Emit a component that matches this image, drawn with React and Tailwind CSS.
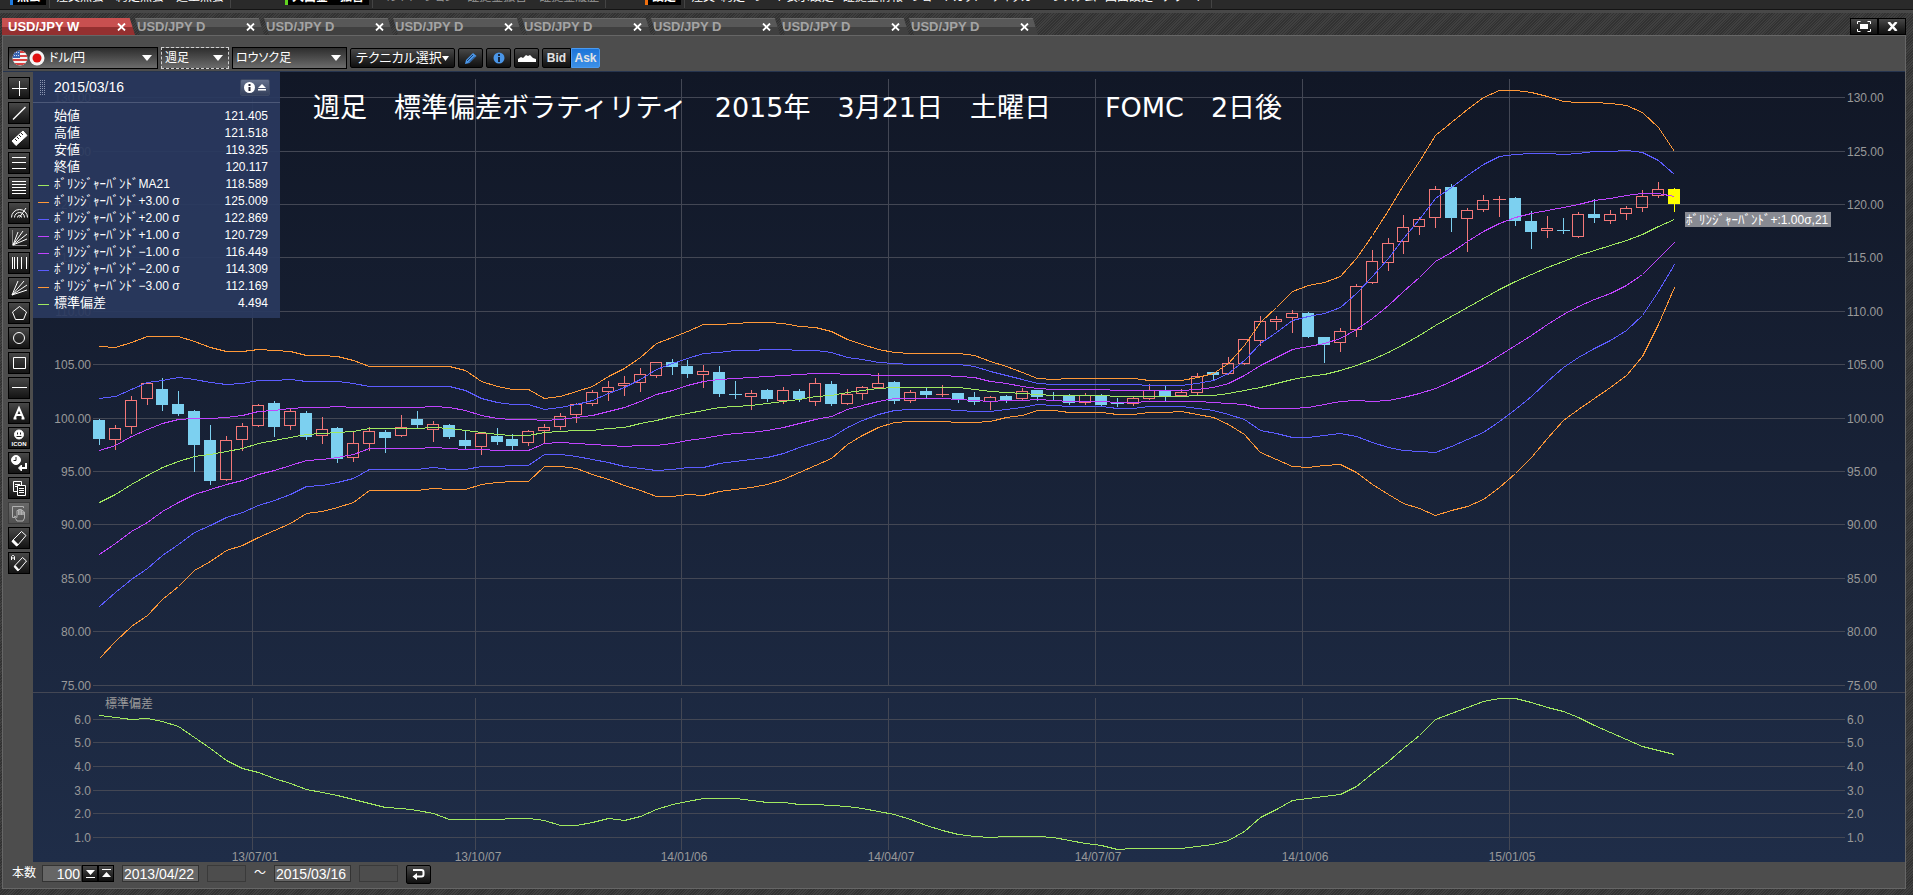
import React, { useState } from 'react';

const MENU_GROUPS = [
  { title: '照会', accent: 'bg-[#1e7be0]', items: ['注文照会', '約定照会', '建玉照会'], width: 'w-[275px]', color: 'gap-[12px] text-white' },
  { title: '入出金・振替', accent: 'bg-[#62d420]', items: ['コンバージョン', '証拠金振替', '証拠金履歴'], width: 'w-[360px]', color: 'gap-[12px] text-[#9a9a9a]' },
  {
    title: '設定',
    accent: 'bg-[#f07010]',
    items: ['注文・約定', 'レート表示設定', '証拠金情報', 'ショートカット', 'ティッカー', 'システム', '画面設定', 'アラート'],
    width: 'w-[556px]',
    color: 'gap-[9px] text-white',
  },
];

const TABS = ['USD/JPY W', 'USD/JPY D', 'USD/JPY D', 'USD/JPY D', 'USD/JPY D', 'USD/JPY D', 'USD/JPY D', 'USD/JPY D'];

const KANA = 'ﾎﾞﾘﾝｼﾞｬｰﾊﾞﾝﾄﾞ';

const LEGEND = [
  { label: '始値', value: '121.405' },
  { label: '高値', value: '121.518' },
  { label: '安値', value: '119.325' },
  { label: '終値', value: '120.117' },
  { kana: true, label: 'MA21', value: '118.589', line: 'bg-[#a0e860]' },
  { kana: true, label: '+3.00 σ', value: '125.009', line: 'bg-[#ff9838]' },
  { kana: true, label: '+2.00 σ', value: '122.869', line: 'bg-[#5c5cff]' },
  { kana: true, label: '+1.00 σ', value: '120.729', line: 'bg-[#c044ff]' },
  { kana: true, label: '−1.00 σ', value: '116.449', line: 'bg-[#c044ff]' },
  { kana: true, label: '−2.00 σ', value: '114.309', line: 'bg-[#5c5cff]' },
  { kana: true, label: '−3.00 σ', value: '112.169', line: 'bg-[#ff9838]' },
  { label: '標準偏差', value: '4.494', line: 'bg-[#a0e860]' },
];

// [direction, high, body top, body bottom, low] on the chart's y scale
const CANDLES = [
  ['D', 419, 420, 439, 445], ['U', 425, 428, 440, 450], ['U', 396, 400, 427, 434], ['U', 383, 383, 399, 405],
  ['D', 378, 389, 405, 411], ['D', 391, 404, 414, 416], ['D', 410, 411, 445, 472], ['D', 425, 440, 481, 485],
  ['U', 436, 440, 480, 481], ['U', 423, 426, 440, 451], ['U', 404, 405, 426, 427], ['D', 401, 403, 427, 437],
  ['U', 409, 411, 426, 430], ['D', 411, 413, 437, 440], ['U', 417, 429, 436, 444], ['D', 427, 428, 459, 463],
  ['U', 432, 443, 458, 462], ['U', 427, 431, 444, 451], ['D', 430, 432, 438, 453], ['U', 415, 427, 436, 437],
  ['D', 411, 419, 425, 428], ['U', 421, 424, 430, 442], ['D', 424, 425, 437, 439], ['D', 430, 440, 446, 450],
  ['U', 432, 433, 447, 455], ['D', 428, 436, 442, 445], ['D', 434, 439, 446, 451], ['U', 430, 431, 443, 446],
  ['U', 424, 427, 431, 444], ['U', 413, 416, 427, 430], ['U', 403, 404, 415, 423], ['U', 390, 392, 404, 406],
  ['U', 381, 387, 392, 401], ['U', 376, 383, 386, 396], ['U', 368, 374, 383, 392], ['U', 362, 362, 376, 378],
  ['D', 359, 362, 367, 375], ['D', 360, 366, 374, 378], ['U', 365, 371, 375, 388], ['D', 366, 372, 394, 397],
  ['D', 381, 394, 395, 399], ['U', 390, 393, 397, 410], ['D', 389, 390, 399, 402], ['U', 387, 390, 401, 404],
  ['D', 389, 391, 399, 402], ['U', 378, 383, 402, 406], ['D', 381, 384, 404, 406], ['U', 389, 394, 404, 405],
  ['U', 386, 387, 394, 400], ['U', 373, 383, 388, 388], ['D', 381, 382, 401, 404], ['U', 390, 392, 401, 403],
  ['D', 388, 391, 395, 398], ['U', 385, 394, 395, 397], ['D', 393, 393, 399, 403], ['D', 392, 397, 402, 405],
  ['U', 396, 397, 402, 410], ['D', 395, 396, 400, 403], ['U', 388, 391, 399, 400], ['D', 390, 390, 397, 401],
  ['D', 392, 395, 396, 400], ['D', 394, 395, 403, 405], ['U', 393, 395, 403, 405], ['D', 394, 395, 405, 407],
  ['D', 398, 403, 404, 407], ['U', 397, 398, 404, 406], ['U', 384, 390, 399, 400], ['D', 386, 390, 396, 401],
  ['U', 389, 392, 396, 396], ['U', 373, 376, 393, 395], ['D', 372, 372, 375, 380], ['U', 357, 363, 374, 375],
  ['U', 339, 339, 364, 365], ['U', 316, 321, 341, 346], ['U', 316, 319, 322, 330], ['U', 310, 313, 318, 333],
  ['D', 312, 313, 337, 338], ['D', 337, 337, 345, 363], ['U', 328, 331, 343, 352], ['U', 284, 286, 330, 337],
  ['U', 250, 261, 283, 284], ['U', 238, 243, 263, 271], ['U', 215, 227, 242, 254], ['U', 217, 219, 227, 235],
  ['U', 186, 189, 218, 228], ['D', 184, 187, 218, 232], ['U', 208, 210, 219, 252], ['U', 195, 200, 210, 212],
  ['U', 196, 199, 200, 217], ['D', 197, 198, 221, 226], ['D', 211, 221, 232, 249], ['U', 216, 228, 231, 238],
  ['D', 218, 230, 231, 234], ['U', 212, 214, 237, 238], ['D', 199, 214, 218, 223], ['U', 210, 214, 221, 224],
  ['U', 206, 208, 214, 220], ['U', 190, 196, 208, 212], ['U', 182, 189, 196, 198], ['N', 188, 189, 204, 212],
];

const MA = [
  502.3, 494.3, 484.3, 475.7, 467.7, 461.3, 456.3, 454.3, 451, 448.3, 443.3, 440.3, 437.3, 434, 433.3, 432, 431.3,
  428.3, 428.3, 428.3, 428.3, 427.3, 428, 430, 432.7, 434.3, 435.3, 435.3, 432.3, 431.3, 430.3, 430, 428.3, 427,
  423.7, 420, 416.7, 413, 410.3, 407.7, 406.3, 405, 403.7, 401.3, 399, 396.7, 395, 392.3, 390, 388.3, 387.3, 387.3,
  387.3, 387.3, 387.7, 389, 391.3, 392.3, 393.7, 394.3, 395, 395.5, 395.5, 395.5, 396.3, 396.3, 396.3, 396.3, 396,
  395.7, 395.3, 393.7, 390, 387.3, 383.3, 379, 376.7, 374.3, 370.3, 365.3, 359.7, 352.7, 344, 335.3, 325.3, 316.7,
  307.7, 298.7, 289.3, 281.7, 274.7, 267.7, 261, 255.7, 250.3, 245.7, 240, 234.3, 226, 219.5,
];

const UPPER = [
  346.3, 347.3, 342, 336.3, 336.3, 336.3, 341.7, 347.3, 351.3, 351.3, 349.3, 350.3, 351.3, 355, 355, 356.3, 360.3,
  366.3, 366.3, 366.3, 366.3, 366.3, 366.3, 370.7, 381.3, 386.3, 389.3, 389.3, 398.3, 396.3, 391.7, 386, 376.7,
  368.3, 357, 343.7, 337, 331.3, 324.7, 324.3, 323.3, 322.7, 322.7, 323, 326, 327.7, 331.7, 339.7, 344.7, 349.3,
  352.3, 353.3, 353.3, 353.3, 353.3, 355.3, 361.3, 366.7, 372.3, 378.3, 379.3, 378.3, 378.3, 378.3, 378.3, 378.3,
  380.3, 380.3, 380.3, 377, 373, 363, 345.7, 322.3, 307.3, 291.7, 285.7, 282.7, 276, 258.3, 235, 210.7, 185, 161.7,
  135, 122.7, 109.3, 97.7, 90.7, 90.3, 92.3, 96.7, 101.3, 102.3, 102.3, 103.7, 105, 112.3, 127.7, 151.3,
];

const DEVIATION = [
  715.3, 717.3, 719.3, 718.3, 721.3, 726, 737.3, 748, 760, 768, 772, 778, 783.7, 789.7, 792.3, 795, 799, 803, 807.3,
  808, 810, 813.7, 819.3, 819.3, 819.3, 819.3, 818.3, 818.3, 820.7, 825.3, 825.3, 822.7, 818.7, 820.7, 816, 809.7,
  804.3, 801.3, 798.3, 798.3, 798.3, 800.3, 802.3, 802.3, 804.3, 804.3, 805.3, 806, 808, 811.7, 814.7, 819, 825.3,
  830.3, 834.3, 836.3, 837.3, 836.3, 836.3, 836.3, 837.7, 840.7, 843.7, 845.7, 849.3, 848.3, 848.3, 848.3, 848.3,
  846.7, 844.7, 840.3, 831, 817.3, 809, 800.7, 798.7, 796.7, 794.7, 786, 773.3, 761.3, 748.3, 735.7, 719.7, 713.7,
  707, 701.7, 698.3, 698.7, 702.7, 707.3, 711.7, 717.3, 725.3, 732, 739.7, 746, 750.3, 754.3,
];

const BANDS = [
  { k: 3, color: '#ff9838' },
  { k: 2, color: '#5c5cff' },
  { k: 1, color: '#c044ff' },
  { k: 0, color: '#a0e860' },
  { k: -1, color: '#c044ff' },
  { k: -2, color: '#5c5cff' },
  { k: -3, color: '#ff9838' },
];

const PRICE_AXIS = [
  ['130.00', 97], ['125.00', 151], ['120.00', 204], ['115.00', 257], ['110.00', 311], ['105.00', 364],
  ['100.00', 418], ['95.00', 471], ['90.00', 524], ['85.00', 578], ['80.00', 631], ['75.00', 685],
];

const DEVIATION_AXIS = [['6.0', 719], ['5.0', 742], ['4.0', 766], ['3.0', 790], ['2.0', 813], ['1.0', 837]];

const DATE_AXIS = [
  ['13/07/01', 252], ['13/10/07', 475], ['14/01/06', 681], ['14/04/07', 888], ['14/07/07', 1095], ['14/10/06', 1302],
  ['15/01/05', 1509],
];

const CANDLE_COLORS = { U: '#f47878', D: '#7cd0f0', N: '#ffff00' };

const barX = (i) => Math.round(98.8 + 15.91 * i);

const toPoints = (values) => values.map((y, i) => `${barX(i) + 0.5},${Math.floor(y) + 0.5}`).join(' ');

const bandPoints = (k) => toPoints(MA.map((mid, i) => mid - ((mid - UPPER[i]) / 3) * k));

const TOOLS = [
  { name: '十字線', icon: <path d="M10.5 3v15M3 10.5h15" /> },
  { name: 'トレンドライン', icon: <path d="M4 16.500 16.500 4" strokeWidth="1.500" /> },
  {
    name: '定規',
    icon: (
      <>
        <path d="M3 13 14 3l4 4.500L7 17.500z" fill="#fff" />
        <path d="m6 11 2 2m0-4 2 2m0-4 2 2m0-4 2 2" stroke="#222" />
      </>
    ),
  },
  { name: '3本線', icon: <path d="M3 4.500h14M3 9.500h14M3 15.500h14" /> },
  { name: '5本線', icon: <path d="M3 3.500h14M3 6.500h14M3 9.500h14M3 12.500h14M3 15.500h14" /> },
  { name: 'アーク', icon: <path d="M2.500 14.500a8 8 0 0 1 16 0M5.500 14.500a5 5 0 0 1 10 0M8.500 14.500a2 2 0 0 1 4 0M10.500 14.500 17 5" /> },
  {
    name: 'ファン',
    icon: (
      <>
        <path d="M3.500 2v15.500H18" stroke="#888" />
        <path d="M4 17 9 4M4 17 14 3M4 17 18 6M4 17l14-6" />
      </>
    ),
  },
  { name: 'タイムゾーン', icon: <path d="M3.500 4v12M5.500 4v12M8.500 4v12M12.500 4v12M17.500 4v12" /> },
  { name: 'スピードライン', icon: <path d="M3 17 9 3M3 17 15 3M3 17 18 7M3 17l15-5" /> },
  { name: '五角形', icon: <path d="m10.500 3.500 7 5.500-3 7.500h-8L3.500 9z" /> },
  { name: '円', icon: <circle cx="10" cy="10" r="5.500" /> },
  { name: '四角形', icon: <path d="M4.500 4.500h12v11h-12z" /> },
  { name: '水平線', icon: <path d="M3 9.500h15" /> },
  { name: 'テキスト', icon: <path d="M5.500 15.500 10 5l4.500 10.500M7 12h6M4.500 15.500h3M12.500 15.500h3" strokeWidth="2" /> },
  {
    name: 'アイコン',
    icon: (
      <>
        <circle cx="10" cy="6.500" r="4.500" fill="#fff" />
        <path d="M8.500 4.500v2M11.500 4.500v2M7.500 8.500h5" stroke="#222" />
        <text x="10" y="18" textAnchor="middle" fontSize="6" fontWeight="700" fill="#fff" stroke="none">ICON</text>
      </>
    ),
  },
  {
    name: '時間を戻す',
    icon: (
      <>
        <circle cx="7" cy="7" r="4.500" fill="#fff" />
        <path d="M7 4v3.500H4.500" stroke="#222" />
        <path d="M17 10v5h-5" strokeWidth="2" />
        <path d="m12.500 12-3 3 3 3z" fill="#fff" />
      </>
    ),
  },
  {
    name: 'コピー',
    icon: (
      <>
        <path d="M4.500 3.500h8v10h-8zM6 6.500h5M6 8.500h5" />
        <path d="M8.500 7.500h8v10h-8z" fill="#222" />
        <path d="M10 10.500h5M10 12.500h5M10 14.500h5" />
      </>
    ),
  },
  {
    name: '移動',
    disabled: true,
    icon: (
      <>
        <path d="M6 14.500H3.500v-11h11V5" />
        <path d="M8 18c-1-2-2-3-2.500-5l2.500 1.500V7.500h1.500V12 6.500H11V12 6.500h1.500V12 7.500H14V12 9h1.500v6L14 18z" />
      </>
    ),
  },
  {
    name: '消しゴム',
    icon: (
      <>
        <path d="m3.500 12.500 9-9 4.500 4-8.500 10z" />
        <path d="m3.500 12.500 5 5" strokeWidth="3" />
      </>
    ),
  },
  {
    name: '全消去',
    icon: (
      <>
        <path d="m5.500 13 8-8.500 4 3.500-8 9.500z" />
        <path d="m5.500 13 4 4.500" strokeWidth="2.500" />
        <path d="M2.500 7V3.500l1-1h1l1 1V7M3 5h3" />
      </>
    ),
  },
];

const DARK_BUTTON = 'border border-black bg-linear-to-b from-[#484848] to-[#101010]';
const FIELD = 'h-[17px] border border-[#333] bg-[#666] px-px text-[14px] leading-[15px] text-white outline-none';

const Caret = () => (
  <svg className="h-[6px] w-[10px] shrink-0" viewBox="0 0 10 6" fill="#fff" aria-hidden="true">
    <path d="M0 0h10L5 6z" />
  </svg>
);

const MenuStrip = () => (
  <nav aria-label="メインメニュー" className="h-[10px] overflow-hidden border-b border-[#141414] bg-[#2a2a2a] pl-[10px]">
    <div className="flex h-[8px] text-[12px] leading-[16px]">
      {MENU_GROUPS.map((group) => (
        <div key={group.title} className={`flex shrink-0 ${group.width}`}>
          <div className="flex h-[5px] items-end gap-[4px] bg-black pr-[5px] font-bold text-white">
            <span className={`h-[5px] w-[3px] ${group.accent}`} />
            <a href="#menu" className="whitespace-nowrap">{group.title}</a>
          </div>
          <div className={`ml-[3px] flex h-[8px] items-end border-x border-[#444] px-[6px] ${group.color}`}>
            {group.items.map((item) => (
              <a key={item} href="#menu" className="mb-[3px] whitespace-nowrap [font-feature-settings:'palt']">{item}</a>
            ))}
          </div>
        </div>
      ))}
    </div>
  </nav>
);

const TabBar = ({ active, onSelect }) => (
  <div className="mr-[7px] ml-[2px] flex h-[17px] items-end">
    {TABS.map((label, i) => (
      <div
        key={i}
        className={
          i === active
            ? 'flex h-[17px] w-[133px] items-center bg-linear-to-b from-[#c85050] from-50% to-[#943030] to-50% pr-[9px] pl-[6px] text-white [clip-path:polygon(0_0,96%_0,100%_100%,0_100%)]'
            : 'flex h-[17px] w-[129px] items-center border-t border-[#6a6a6a] bg-linear-to-b from-[#585858] from-50% to-[#404040] to-50% pr-[9px] pl-[2px] text-[#a4a4a4] [clip-path:polygon(0_0,96%_0,100%_100%,4%_100%)]'
        }
      >
        <button type="button" onClick={() => onSelect(i)} className="flex-1 text-left text-[13px] leading-[16px] font-bold">
          {label}
        </button>
        <button type="button" aria-label="タブを閉じる" className="text-white">
          <svg className="h-[8px] w-[9px]" viewBox="0 0 9 8" fill="none" stroke="currentColor" strokeWidth="1.800">
            <path d="m1 .5 7 7m0-7-7 7" />
          </svg>
        </button>
      </div>
    ))}
    <div className="ml-auto flex">
      <button type="button" aria-label="最大化" className={`flex h-[17px] w-[28px] items-center justify-center ${DARK_BUTTON}`}>
        <svg className="h-[11px] w-[14px]" viewBox="0 0 14 11" fill="none" stroke="#fff">
          <path d="M.5 3V.5h3M10.500.5h3V3M13.500 8v2.500h-3M3.500 10.500h-3V8" />
          <path d="M3 3h8v5H3z" fill="#fff" stroke="none" />
        </svg>
      </button>
      <button type="button" aria-label="閉じる" className={`flex h-[17px] w-[28px] items-center justify-center ${DARK_BUTTON}`}>
        <svg className="h-[9px] w-[11px]" viewBox="0 0 11 9" fill="none" stroke="#fff" strokeWidth="2.500">
          <path d="m1.500 0 8 9m0-9-8 9" />
        </svg>
      </button>
    </div>
  </div>
);

const Picker = ({ label, options, className, children }) => (
  <div className={`flex h-[22px] items-center bg-linear-to-b from-[#2e2e2e] to-[#6c6c6c] pr-[5px] pl-[3px] ${className}`}>
    {children}
    <select
      aria-label={label}
      className="min-w-0 flex-1 appearance-none bg-transparent text-[12px] leading-[18px] text-white outline-none [font-feature-settings:'palt']"
    >
      {options.map((option) => (
        <option key={option} className="bg-[#444]">{option}</option>
      ))}
    </select>
    <Caret />
  </div>
);

const Flags = () => (
  <svg className="mr-[3px] h-[16px] w-[34px] shrink-0" viewBox="0 0 34 16" aria-hidden="true">
    <defs>
      <clipPath id="us">
        <circle cx="8" cy="8" r="7.500" />
      </clipPath>
    </defs>
    <g clipPath="url(#us)">
      <path d="M0 0h16v16H0z" fill="#f4f4f4" />
      <path d="M0 2h16M0 6h16M0 10h16M0 14h16" stroke="#d84040" strokeWidth="2" />
      <path d="M0 0h8v8H0z" fill="#3a64b0" />
      <path d="M2 2.500h6M2 5.500h6" stroke="#c8d8f0" strokeDasharray="1 1" />
    </g>
    <circle cx="25" cy="8" r="7.500" fill="#f4f4f4" />
    <circle cx="25" cy="8" r="4.500" fill="#e01010" />
  </svg>
);

const Toolbar = () => {
  const [side, setSide] = useState('Ask');

  return (
    <div className="flex h-[36px] items-center gap-[3px] border-b border-[#26344e] pt-[9px] pl-[5px]">
      <Picker label="通貨ペア" options={['ドル/円', 'ユーロ/円']} className="w-[150px] border border-black">
        <Flags />
      </Picker>
      <Picker label="足種" options={['週足', '日足']} className="w-[68px] border border-dashed border-[#d0d0d0]" />
      <Picker label="チャート種類" options={['ロウソク足', 'ラインチャート']} className="w-[115px] border border-black" />
      <button
        type="button"
        className={`flex h-[20px] w-[105px] items-center justify-between rounded-xs px-[5px] text-[13px] leading-[18px] whitespace-nowrap text-white [font-feature-settings:'palt'] ${DARK_BUTTON}`}
      >
        テクニカル選択
        <svg className="h-[5px] w-[7px]" viewBox="0 0 7 5" fill="#fff"><path d="M0 0h7L3.500 5z" /></svg>
      </button>
      <button type="button" aria-label="描画" className={`flex h-[20px] w-[25px] items-center justify-center rounded-xs ${DARK_BUTTON}`}>
        <svg className="h-[13px] w-[14px]" viewBox="0 0 14 13" fill="#4a96e8">
          <path d="m1 12 1-4 7-7 3.500 3L5.500 11z" />
          <path d="m3 9 6-6M5 10.500l6-6" stroke="#1c3c66" />
        </svg>
      </button>
      <button type="button" aria-label="情報" className={`flex h-[20px] w-[25px] items-center justify-center rounded-xs ${DARK_BUTTON}`}>
        <svg className="h-[12px] w-[12px]" viewBox="0 0 12 12">
          <circle cx="6" cy="6" r="5.500" fill="#4a96e8" />
          <path d="M6 2v2M6 5v5" stroke="#182840" strokeWidth="2" />
        </svg>
      </button>
      <button type="button" aria-label="エリア表示" className={`flex h-[20px] w-[25px] items-center justify-center rounded-xs ${DARK_BUTTON}`}>
        <svg className="h-[8px] w-[18px]" viewBox="0 0 18 8" fill="#fff">
          <path d="M0 8V5l3-2 2 1 3-3 2 1 2-1 3 3 3 1v3z" />
        </svg>
      </button>
      <div className="flex">
        {['Bid', 'Ask'].map((name) => (
          <button
            key={name}
            type="button"
            aria-pressed={side === name}
            onClick={() => setSide(name)}
            className={
              side === name
                ? 'h-[20px] w-[29px] rounded-r-xs border border-[#4a9af0] bg-linear-to-b from-[#1c74d8] to-[#3c90e8] text-[12px] leading-[18px] font-bold text-[#e4e4e4]'
                : 'h-[20px] w-[29px] rounded-l-xs border border-black bg-linear-to-b from-[#444] to-[#111] text-[12px] leading-[18px] font-bold text-[#e4e4e4]'
            }
          >
            {name}
          </button>
        ))}
      </div>
    </div>
  );
};

const ToolRail = () => (
  <aside className="flex w-[30px] shrink-0 flex-col items-center gap-[3px] pt-[5px] pl-[2px]">
    {TOOLS.map((tool) => (
      <button
        key={tool.name}
        type="button"
        aria-label={tool.name}
        disabled={tool.disabled}
        className={
          tool.disabled
            ? 'h-[22px] w-[22px] border border-[#3c3c3c] bg-linear-to-b from-[#686868] to-[#505050] text-[#b0b0b0]'
            : 'h-[22px] w-[22px] border border-black bg-linear-to-b from-[#484848] to-[#141414] text-white'
        }
      >
        <svg className="h-[20px] w-[20px]" viewBox="0 0 20 20" fill="none" stroke="currentColor">
          {tool.icon}
        </svg>
      </button>
    ))}
  </aside>
);

const Candle = ({ index, data }) => {
  const [kind, high, top, bottom, low] = data;
  const x = barX(index);
  const color = CANDLE_COLORS[kind];
  const flat = bottom - top <= 1;

  return (
    <g stroke={color}>
      <path d={`M${x + 0.5} ${high}V${top}M${x + 0.5} ${bottom}V${low}`} />
      {flat && <path d={`M${x - 6} ${top + 0.5}H${x + 7}`} />}
      {!flat && kind === 'U' && <rect x={x - 5.5} y={top + 0.5} width="11" height={bottom - top - 1} fill="none" />}
      {!flat && kind !== 'U' && <rect x={x - 6} y={top} width="12" height={bottom - top} fill={color} stroke="none" />}
    </g>
  );
};

const AxisRow = ({ label, y }) => (
  <>
    <path d={`M93 ${y + 0.5}H1845`} stroke="#434754" />
    <text x="91" y={y + 5} textAnchor="end">{label}</text>
    <text x="1847" y={y + 5}>{label}</text>
  </>
);

const Chart = () => (
  <svg
    className="block h-auto w-full text-[12px]"
    viewBox="33 72 1872 790"
    role="img"
    aria-label="USD/JPY 週足チャート"
    fill="#999"
  >
    <defs>
      <linearGradient id="sky" x1="0" y1="0" x2="0" y2="1">
        <stop offset="0" stopColor="#111726" />
        <stop offset="1" stopColor="#1f2d48" />
      </linearGradient>
    </defs>
    <rect x="33" y="72" width="1872" height="790" fill="url(#sky)" />

    <path d="M33 692.500H1905" stroke="#434754" />
    {PRICE_AXIS.map(([label, y]) => (
      <AxisRow key={label} label={label} y={y} />
    ))}
    {DEVIATION_AXIS.map(([label, y]) => (
      <AxisRow key={label} label={label} y={y} />
    ))}
    {DATE_AXIS.map(([label, x]) => (
      <g key={label}>
        <path d={`M${x + 0.5} 79V685M${x + 0.5} 698V850`} stroke="#434754" />
        <text x={x + 3} y="861" textAnchor="middle">{label}</text>
      </g>
    ))}
    <text x="105" y="708">標準偏差</text>

    <g shapeRendering="crispEdges">
      {CANDLES.map((data, i) => (
        <Candle key={i} index={i} data={data} />
      ))}
      <g fill="none">
        {BANDS.map((band) => (
          <polyline key={band.k} points={bandPoints(band.k)} stroke={band.color} />
        ))}
        <polyline points={toPoints(DEVIATION)} stroke="#a0e860" />
      </g>
    </g>

    <rect x="1685" y="212" width="146" height="15" fill="#888a92" />
    <text x="1686" y="224" fill="#fff">
      <tspan fontSize="13">{KANA}</tspan>+:1.00σ,21
    </text>
    <text x="313" y="117" fill="#fff" className="font-['DejaVu_Sans','Noto_Sans_CJK_JP',sans-serif] text-[27px]">
      週足　標準偏差ボラティリティ　2015年　3月21日　土曜日　　FOMC　2日後
    </text>
  </svg>
);

const Legend = () => (
  <section className="absolute top-0 left-0 h-[246px] w-[247px] bg-[#2a395f]/93 text-white">
    <header className="flex h-[31px] items-center border-b border-[#4c5878] pr-[10px] pl-[7px]">
      <svg className="h-[15px] w-[5px]" viewBox="0 0 5 15" stroke="#8c96b0" strokeDasharray="1 1" aria-hidden="true">
        <path d="M.5 0v15M2.500 0v15M4.500 0v15" />
      </svg>
      <h2 className="ml-[9px] flex-1 text-[14px] leading-[16px]">2015/03/16</h2>
      <button
        type="button"
        aria-label="情報を閉じる"
        className="flex h-[17px] w-[30px] items-center justify-center gap-[3px] rounded-xs border border-[#3c4864] bg-linear-to-b from-[#64708c] to-[#34405c]"
      >
        <svg className="h-[11px] w-[11px]" viewBox="0 0 11 11">
          <circle cx="5.500" cy="5.500" r="5.500" fill="#fff" />
          <path d="M5.500 2v2M5.500 5v4" stroke="#223" strokeWidth="2" />
        </svg>
        <svg className="h-[7px] w-[8px]" viewBox="0 0 8 7" fill="#fff">
          <path d="M0 4h8L4 0zM0 5h8v1.500H0z" />
        </svg>
      </button>
    </header>
    <table className="mt-[4px] w-full text-[12px] leading-[16px]">
      <tbody>
        {LEGEND.map((row) => (
          <tr key={row.label} className="h-[17px]">
            <td className="w-[21px] p-0 pl-[5px]">
              {row.line && <span className={`mt-[3px] block h-px w-[11px] ${row.line}`} />}
            </td>
            <th scope="row" className="p-0 text-left font-normal">
              <div className="flex h-[17px] items-center whitespace-nowrap">
                {row.kana && <span className="text-[13px] leading-[16px]">{KANA}</span>}
                <span className={row.kana ? 'text-[12px] leading-[16px]' : 'text-[13px] leading-[16px]'}>{row.label}</span>
              </div>
            </th>
            <td className="p-0 pr-[12px] text-right">{row.value}</td>
          </tr>
        ))}
      </tbody>
    </table>
  </section>
);

const RangeBar = () => (
  <form className="flex h-[26px] items-start gap-[8px] pt-[3px] pl-[9px] text-white" onSubmit={(e) => e.preventDefault()}>
    <label htmlFor="bars" className="text-[12px] leading-[16px]">本数</label>
    <div className="-ml-[2px] flex">
      <input id="bars" defaultValue="100" className={`w-[40px] text-right ${FIELD}`} />
      <button type="button" aria-label="減らす" className={`flex h-[17px] w-[16px] items-center justify-center ${DARK_BUTTON}`}>
        <svg className="h-[9px] w-[9px]" viewBox="0 0 9 9" fill="#fff"><path d="M0 1h9L4.500 6zM0 8h9v1H0z" /></svg>
      </button>
      <button type="button" aria-label="増やす" className={`flex h-[17px] w-[16px] items-center justify-center ${DARK_BUTTON}`}>
        <svg className="h-[9px] w-[9px]" viewBox="0 0 9 9" fill="#fff"><path d="M0 8h9L4.500 3zM0 0h9v1H0z" /></svg>
      </button>
    </div>
    <input aria-label="開始日" defaultValue="2013/04/22" className={`w-[77px] ${FIELD}`} />
    <input aria-label="開始時刻" disabled className="h-[17px] w-[39px] border border-[#3a3a3a] bg-[#4d4d4d]" />
    <span className="w-[12px] text-[12px] leading-[16px]">～</span>
    <input aria-label="終了日" defaultValue="2015/03/16" className={`w-[77px] ${FIELD}`} />
    <input aria-label="終了時刻" disabled className="h-[17px] w-[39px] border border-[#3a3a3a] bg-[#4d4d4d]" />
    <button type="submit" aria-label="更新" className="flex h-[19px] w-[25px] items-center justify-center rounded-xs border border-black bg-linear-to-b from-[#484848] to-[#101010]">
      <svg className="h-[11px] w-[13px]" viewBox="0 0 13 11" fill="none" stroke="#fff" strokeWidth="2">
        <path d="M1 1h8.500a2 2 0 0 1 2 2v2.500a2 2 0 0 1-2 2H4" />
        <path d="M5 4v7L.5 7.500z" fill="#fff" stroke="none" />
      </svg>
    </button>
  </form>
);

const App = () => {
  const [activeTab, setActiveTab] = useState(0);

  return (
    <div className="min-h-screen bg-[#383838] bg-[repeating-linear-gradient(135deg,#323232_0px,#323232_1px,#404040_1px,#404040_2px)] font-['Liberation_Sans','Noto_Sans_CJK_JP',sans-serif]">
      <MenuStrip />
      <div className="mb-[5px] h-[3px] bg-[#484848]" />
      <TabBar active={activeTab} onSelect={setActiveTab} />
      <main className="mr-[7px] ml-[2px] border border-[#666] bg-[#4d4d4d]">
        <Toolbar />
        <div className="flex">
          <ToolRail />
          <div className="relative min-w-0 flex-1">
            <Chart />
            <Legend />
          </div>
        </div>
        <RangeBar />
      </main>
      <div className="h-[6px]" />
    </div>
  );
};

export default App;
